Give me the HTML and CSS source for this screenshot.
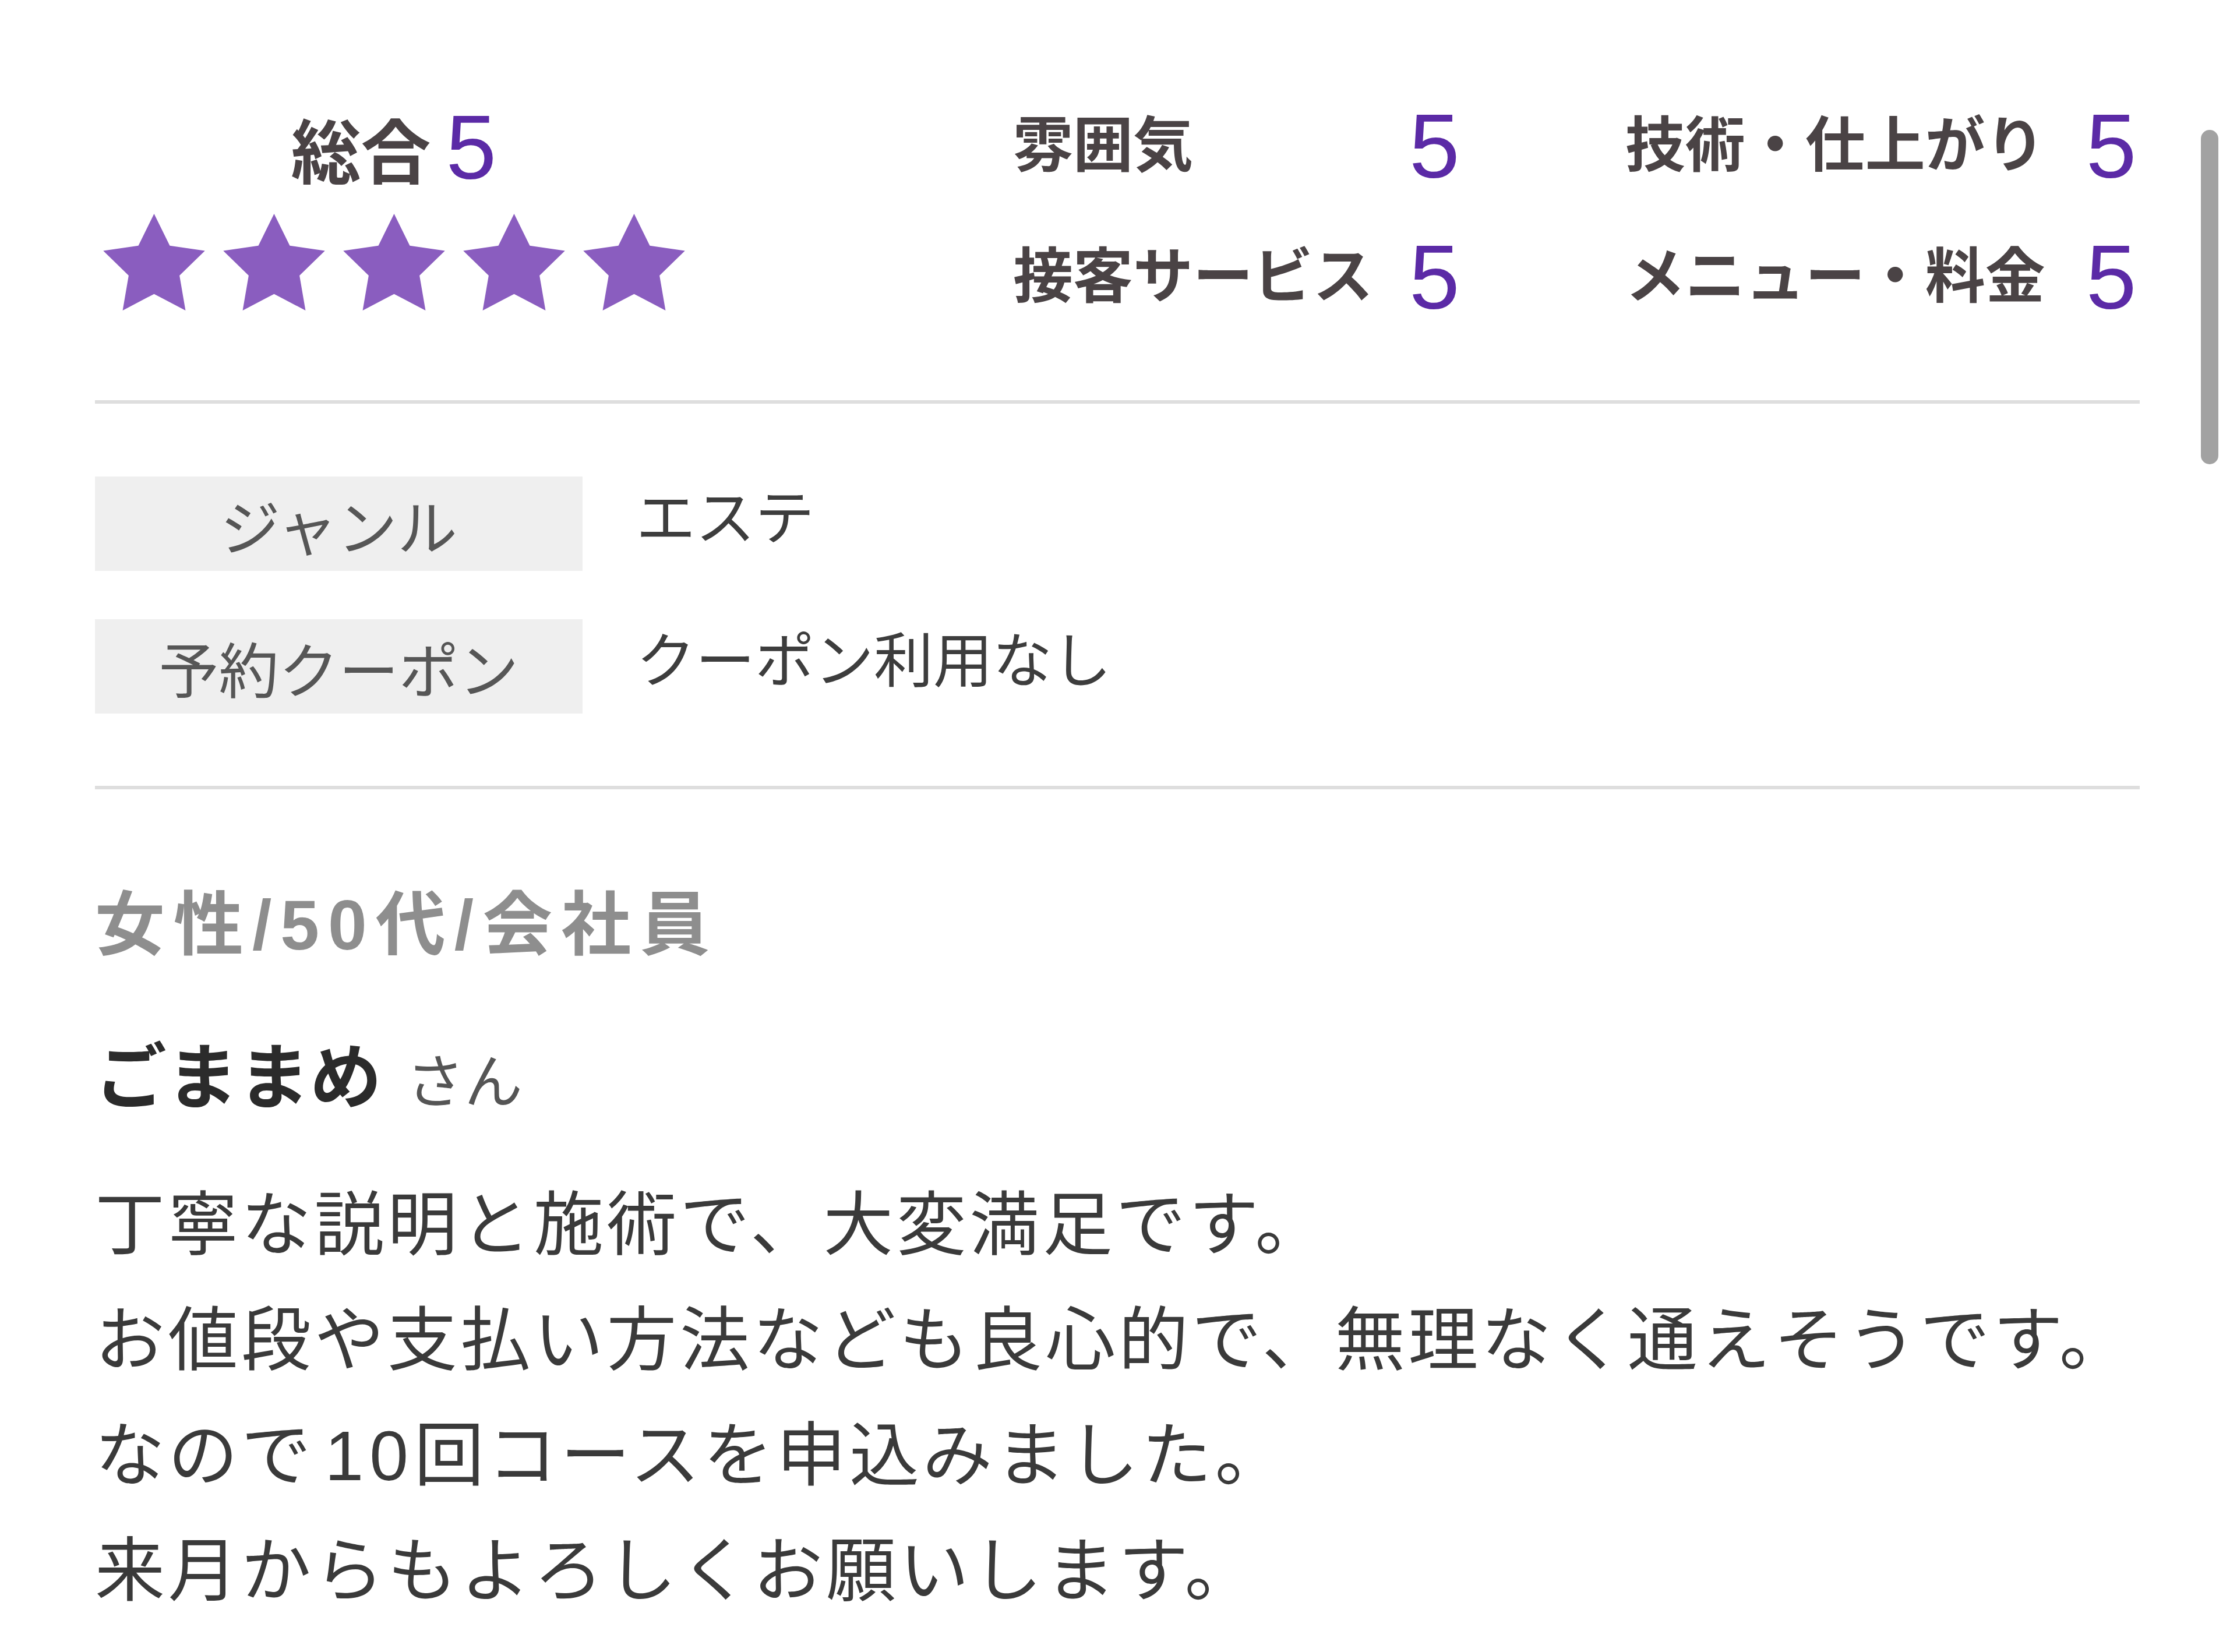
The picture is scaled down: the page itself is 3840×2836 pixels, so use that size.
FILE: index.html
```html
<!DOCTYPE html>
<html lang="ja">
<head>
<meta charset="utf-8">
<title>口コミ</title>
<link rel="stylesheet" href="styles.css">
</head>
<body>
<div class="page">
  <section class="top">
    <div class="overall">
      <div class="overall-title"><span class="overall-label">総合</span><span class="score score-big">5</span></div>
      <div class="stars">
        <svg class="star" viewBox="2 2 20 19.02"><polygon points="12,2 15.09,8.26 22,9.27 17,14.14 18.18,21.02 12,17.77 5.82,21.02 7,14.14 2,9.27 8.91,8.26"/></svg>
        <svg class="star" viewBox="2 2 20 19.02"><polygon points="12,2 15.09,8.26 22,9.27 17,14.14 18.18,21.02 12,17.77 5.82,21.02 7,14.14 2,9.27 8.91,8.26"/></svg>
        <svg class="star" viewBox="2 2 20 19.02"><polygon points="12,2 15.09,8.26 22,9.27 17,14.14 18.18,21.02 12,17.77 5.82,21.02 7,14.14 2,9.27 8.91,8.26"/></svg>
        <svg class="star" viewBox="2 2 20 19.02"><polygon points="12,2 15.09,8.26 22,9.27 17,14.14 18.18,21.02 12,17.77 5.82,21.02 7,14.14 2,9.27 8.91,8.26"/></svg>
        <svg class="star" viewBox="2 2 20 19.02"><polygon points="12,2 15.09,8.26 22,9.27 17,14.14 18.18,21.02 12,17.77 5.82,21.02 7,14.14 2,9.27 8.91,8.26"/></svg>
      </div>
    </div>
    <div class="ratings">
      <span class="r-label">雰囲気</span><span class="score r-score">5</span>
      <span class="r-label col2">技術・仕上がり</span><span class="score r-score col2-score">5</span>
      <span class="r-label">接客サービス</span><span class="score r-score">5</span>
      <span class="r-label col2">メニュー・料金</span><span class="score r-score col2-score">5</span>
    </div>
  </section>

  <section class="info">
    <div class="info-row">
      <div class="info-label">ジャンル</div>
      <div class="info-value">エステ</div>
    </div>
    <div class="info-row">
      <div class="info-label">予約クーポン</div>
      <div class="info-value">クーポン利用なし</div>
    </div>
  </section>

  <section class="review">
    <div class="demo">女性/50代/会社員</div>
    <div class="name">ごままめ<span class="san">さん</span></div>
    <div class="body">
      <p>丁寧な説明と施術で、大変満足です。</p>
      <p>お値段や支払い方法なども良心的で、無理なく通えそうです。</p>
      <p>なので<span class="num">10</span>回コースを申込みました。</p>
      <p>来月からもよろしくお願いします。</p>
    </div>
  </section>
</div>
<div class="scrollbar"></div>
</body>
</html>
```

FILE: styles.css
```css
html, body {
  margin: 0;
  padding: 0;
  background: #ffffff;
}

body {
  font-family: "Noto Sans CJK JP", "Noto Sans", sans-serif;
  color: #3a3a3a;
  width: 3840px;
  height: 2836px;
  overflow: hidden;
  position: relative;
}

.page {
  padding: 0 167px 0 163px;
}

/* ---------- top ratings ---------- */
.top {
  display: flex;
  box-sizing: border-box;
  height: 693px;
  border-bottom: 6px solid #dedede;
}

.overall {
  width: 1026px;
  display: flex;
  flex-direction: column;
  align-items: center;
  padding-top: 177px;
}

.overall-title {
  line-height: 150px;
  height: 152px;
  white-space: nowrap;
}

.overall-label {
  font-size: 120px;
  font-weight: 700;
  color: #4a4345;
  margin-right: 26px;
}

.score {
  font-family: "Liberation Sans", "Noto Sans", sans-serif;
  color: #5b2aa6;
  font-weight: 400;
}

.score-big {
  font-size: 156px;
}

.stars {
  display: flex;
  gap: 31px;
  margin-top: 38px;
}

.star {
  display: block;
  width: 175px;
  height: 166px;
  fill: #8a5dbf;
}

.ratings {
  margin-left: 550px;
  padding-top: 137px;
  display: grid;
  grid-template-columns: auto auto auto auto;
  grid-auto-rows: 225px;
  align-items: center;
  align-content: start;
  line-height: 180px;
}

.r-label {
  font-size: 103px;
  font-weight: 700;
  color: #4a4345;
  white-space: nowrap;
  padding-bottom: 16px;
}

.r-label.col2 {
  margin-left: 284px;
}

.r-score {
  font-size: 156px;
  margin-left: 62px;
}

.r-score.col2-score {
  margin-left: 70px;
}

/* ---------- info table ---------- */
.info {
  padding: 125px 0 124px;
  border-bottom: 6px solid #dedede;
  display: flex;
  flex-direction: column;
  gap: 83px;
}

.info-row {
  display: flex;
  align-items: center;
  height: 162px;
}

.info-label {
  width: 837px;
  height: 100%;
  background: #efefef;
  display: flex;
  align-items: center;
  justify-content: center;
  font-size: 103px;
  color: #565656;
  line-height: 1;
  padding-top: 2px;
  box-sizing: border-box;
}

.info-value {
  margin-left: 92px;
  font-size: 102px;
  color: #3d3d3d;
  line-height: 1;
  padding-bottom: 34px;
}

/* ---------- review ---------- */
.review {
  padding-top: 158px;
}

.demo {
  font-family: "Liberation Sans", "Noto Sans CJK JP", sans-serif;
  font-size: 120px;
  font-weight: 700;
  color: #8e8e8e;
  line-height: 150px;
  letter-spacing: 15px;
}

.name {
  margin-top: 101px;
  font-size: 123px;
  font-weight: 700;
  color: #2b2b2b;
  line-height: 150px;
}

.san {
  font-size: 100px;
  font-weight: 400;
  color: #555555;
  margin-left: 42px;
}

.body {
  margin-top: 79px;
  font-family: "Liberation Sans", "Noto Sans CJK JP", sans-serif;
  font-size: 120px;
  line-height: 198px;
  letter-spacing: 5.5px;
  color: #3a3a3a;
}

.body .num {
  margin-left: 18px;
  letter-spacing: 10px;
}

.body p {
  margin: 0;
  white-space: nowrap;
}

/* overlay scrollbar */
.scrollbar {
  position: absolute;
  left: 3778px;
  top: 223px;
  width: 30px;
  height: 574px;
  border-radius: 15px;
  background: #a2a2a2;
}
```
